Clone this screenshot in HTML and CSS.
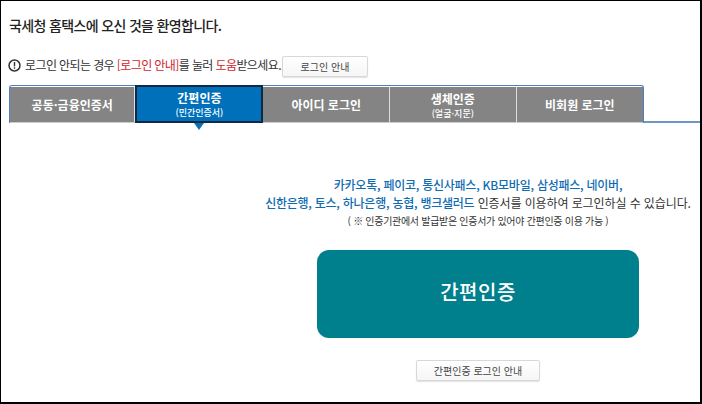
FILE: index.html
```html
<!DOCTYPE html>
<html lang="ko">
<head>
<meta charset="utf-8">
<title>국세청 홈택스</title>
<link rel="stylesheet" href="styles.css">
</head>
<body>
<div class="frame">
  <h1 class="title">국세청 홈택스에 오신 것을 환영합니다.</h1>
  <div class="notice">
    <svg class="info" width="13" height="13" viewBox="0 0 13 13" aria-hidden="true">
      <circle cx="6.5" cy="6.5" r="5.5" fill="none" stroke="#333" stroke-width="1.5"/>
      <rect x="5.8" y="3" width="1.4" height="4.4" fill="#333"/>
      <rect x="5.8" y="8.3" width="1.4" height="1.5" fill="#333"/>
    </svg>
    <span class="notice-text">로그인 안되는 경우 <em>[로그인 안내]</em>를 눌러 <em>도움</em>받으세요.</span>
    <button class="btn btn-small">로그인 안내</button>
  </div>
  <div class="tabbar">
    <div class="tabs">
      <div class="tab">공동·금융인증서</div>
      <div class="tab active">간편인증<small>(민간인증서)</small></div>
      <div class="tab">아이디 로그인</div>
      <div class="tab">생체인증<small>(얼굴·지문)</small></div>
      <div class="tab">비회원 로그인</div>
    </div>
  </div>
  <div class="content">
    <p class="line"><b>카카오톡, 페이코, 통신사패스, KB모바일, 삼성패스, 네이버,</b></p>
    <p class="line"><b>신한은행, 토스, 하나은행, 농협, 뱅크샐러드</b> 인증서를 이용하여 로그인하실 수 있습니다.</p>
    <p class="note">( ※ 인증기관에서 발급받은 인증서가 있어야 간편인증 이용 가능 )</p>
    <div class="cta">간편인증</div>
    <button class="btn btn-guide">간편인증 로그인 안내</button>
  </div>
</div>
</body>
</html>
```
FILE: styles.css
```css
* { box-sizing: border-box; }
html, body { margin: 0; padding: 0; background: #fff; }
body { font-family: "Noto Sans CJK KR", "Liberation Sans", sans-serif; color: #333; }
.frame {
  width: 702px; height: 404px; overflow: hidden;
  border-style: solid; border-color: #000;
  border-width: 1px 2px 2px 1px;
  padding: 15px 0 0 7px;
}
.title { margin: 0 0 0 1px; font-size: 14px; line-height: 18px; font-weight: 500; color: #222; letter-spacing: -0.65px; }
.notice { display: flex; align-items: center; margin-top: 20px; height: 22px; }
.info { margin-right: 4px; flex: none; }
.notice-text { font-size: 12px; line-height: 16px; letter-spacing: -0.6px; white-space: nowrap; }
.notice-text em { font-style: normal; color: #d2232a; }
.btn {
  font-family: inherit; font-size: 10px; color: #444; padding: 0;
  background: linear-gradient(#fff, #f6f6f6);
  border: 1px solid #d8d8d8; border-radius: 2px;
  box-shadow: 0 1px 1px rgba(0,0,0,.12);
}
.btn-small { width: 86px; height: 21px; margin: 2px 0 0 1px; }
.tabbar { margin: 9px 0 0 1px; height: 38px; border-bottom: 2px solid #6b97c9; }
.tabs {
  display: flex; width: 635px; height: 38px;
  border: 1px solid #4c82c0; border-bottom: 0; border-radius: 3px 3px 0 0;
  background: #fff; margin-bottom: -2px; position: relative;
}
.tab {
  flex: 0 0 126.6px; height: 36px; background: #848484; color: #fff;
  border-right: 1px solid #ddd;
  display: flex; flex-direction: column; align-items: center; justify-content: center;
  font-size: 12px; line-height: 15px; font-weight: 700; white-space: nowrap;
  border-bottom: 1px solid #ccc; margin-top: 1px;
}
.tab:first-child { flex-basis: 125.4px; }
.tab:last-child { border-right: 0; }
.tab small { font-size: 9px; line-height: 11px; font-weight: 500; margin-top: 2px; }
.active {
  position: relative; flex-basis: 128px; background: #0070ba; border: 2px solid #0d2a45; height: 38px; margin-top: -1px; z-index: 1;
}
.active::after {
  content: ""; position: absolute; left: 50%; top: 36px; margin-left: -5px;
  border: 5px solid transparent; border-bottom: 0; border-top: 7px solid #0f6fb0;
}
.content { display: flex; flex-direction: column; align-items: center; padding: 53px 0 0 0; margin-left: 252px; width: 436px; }
.line { margin: 0; font-size: 12px; line-height: 18px; white-space: nowrap; letter-spacing: -0.1px; }
.line b { color: #0f6cb2; font-weight: 500; letter-spacing: -0.25px; }
.note { margin: 1px 0 0; font-size: 10px; line-height: 15px; white-space: nowrap; letter-spacing: -0.3px; }
.cta {
  width: 322px; height: 88px; margin-top: 22px; padding-bottom: 6px;
  background: #007f8c; border-radius: 12px; color: #fff;
  display: flex; align-items: center; justify-content: center;
  font-size: 20px; font-weight: 500; letter-spacing: 0.5px;
}
.btn-guide { width: 124px; height: 21px; margin-top: 22px; }
```
